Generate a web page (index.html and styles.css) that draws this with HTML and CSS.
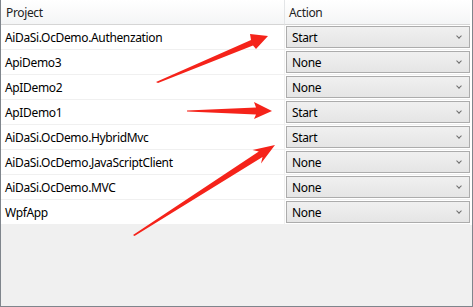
FILE: index.html
```html
<!DOCTYPE html>
<html lang="en">
<head>
    <meta charset="UTF-8">
    <title>Project Actions</title>
    <link rel="stylesheet" href="styles.css">
</head>
<body>
    <div class="window">
        <div class="grid">
            <div class="head-cell">Project</div>
            <div class="head-cell action-col">Action</div>

            <div class="cell">AiDaSi.OcDemo.Authenzation</div>
            <div class="cell action-col"><div class="combo">Start<span class="chev"></span></div></div>

            <div class="cell">ApiDemo3</div>
            <div class="cell action-col"><div class="combo">None<span class="chev"></span></div></div>

            <div class="cell">ApIDemo2</div>
            <div class="cell action-col"><div class="combo">None<span class="chev"></span></div></div>

            <div class="cell">ApIDemo1</div>
            <div class="cell action-col"><div class="combo">Start<span class="chev"></span></div></div>

            <div class="cell">AiDaSi.OcDemo.HybridMvc</div>
            <div class="cell action-col"><div class="combo">Start<span class="chev"></span></div></div>

            <div class="cell">AiDaSi.OcDemo.JavaScriptClient</div>
            <div class="cell action-col"><div class="combo">None<span class="chev"></span></div></div>

            <div class="cell">AiDaSi.OcDemo.MVC</div>
            <div class="cell action-col"><div class="combo">None<span class="chev"></span></div></div>

            <div class="cell">WpfApp</div>
            <div class="cell action-col"><div class="combo">None<span class="chev"></span></div></div>
        </div>

        <!-- annotation arrows drawn over the grid -->
        <svg class="arrows" width="473" height="307" viewBox="0 0 473 307">
            <polygon points="156,82 158,83 253,45.5 256,49 268,36 250,34 251,40" fill="#f5231a"/>
            <polygon points="187,110.5 256,107.5 254,102 272,111 254,119 256,114.5 187,111.5" fill="#f5231a"/>
            <polygon points="275,145 252.5,150 258.8,151.5 133,235 134.5,236 262.5,157 261,163.5" fill="#f5231a"/>
        </svg>
    </div>
</body>
</html>
```

FILE: styles.css
```css
body {
    margin: 0;
    background-color: #f0f0f0;
    font-family: "Segoe UI", "Noto Sans", Arial, sans-serif;
    font-size: 12px;
    letter-spacing: -0.35px;
    color: #000;
}
.window {
    position: relative;
    width: 471px;
    height: 306px;
    border: 1px solid #7f858c;
    border-top: none;
    background-color: #f0f0f0;
    overflow: hidden;
}
.grid {
    display: grid;
    grid-template-columns: 283px 186px;
    grid-auto-rows: 25px;
    background-color: #fff;
}
.head-cell {
    display: flex;
    align-items: center;
    padding-left: 5px;
    background: linear-gradient(#ffffff, #f4f5f6);
    border-bottom: 1px solid #d5d5d5;
    color: #222;
}
.head-cell.action-col {
    padding-left: 4px;
    border-left: 1px solid #e3e5e7;
}
.cell {
    display: flex;
    align-items: center;
    padding-left: 4px;
    border-bottom: 1px solid #f0f0f0;
}
.cell.action-col {
    padding: 1px 0 1px 1px;
    border-left: 1px solid #f0f0f0;
}
.combo {
    flex: 1;
    height: 100%;
    box-sizing: border-box;
    display: flex;
    align-items: center;
    justify-content: space-between;
    padding: 0 8px 0 5px;
    border: 1px solid #acacac;
    background: linear-gradient(#f0f0f0, #e5e5e5);
}
.chev {
    width: 3px;
    height: 3px;
    border-right: 1px solid #6d6d6d;
    border-bottom: 1px solid #6d6d6d;
    transform: rotate(45deg);
    margin-top: -2px;
}
.arrows {
    position: absolute;
    left: -1px;
    top: 0;
}
```
